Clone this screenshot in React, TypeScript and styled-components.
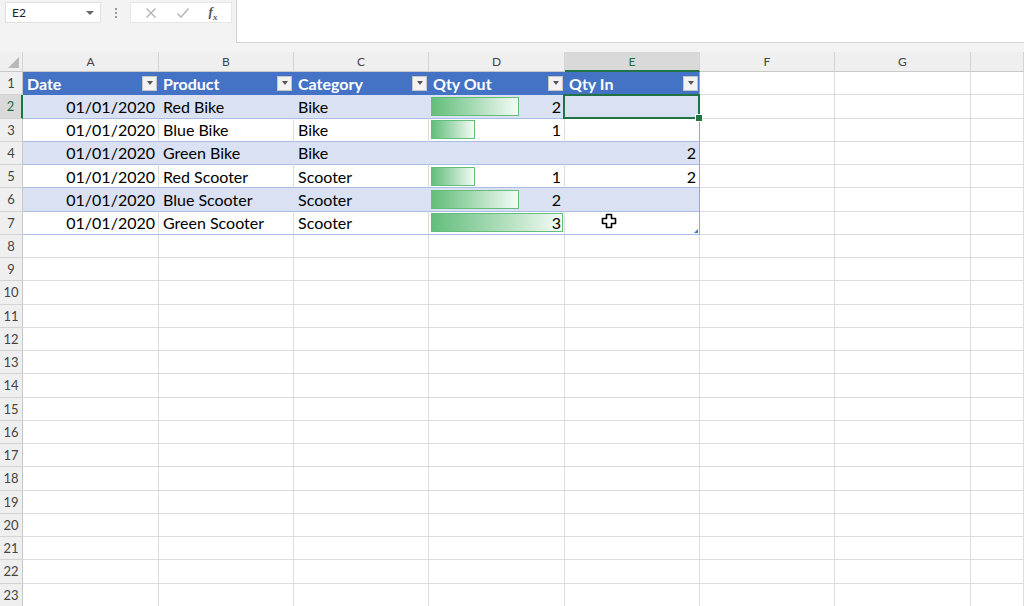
import React from "react";
import styled, { createGlobalStyle } from "styled-components";

const GlobalStyle = createGlobalStyle`
  html, body {
    margin: 0;
    padding: 0;
    background: #ffffff;
    overflow: hidden;
  }
  body {
    font-family: Lato, "Open Sans", "Liberation Sans", sans-serif;
  }
`;

const Page = styled.div`
  position: relative;
  width: 1024px;
  height: 606px;
  overflow: hidden;
  background: #f3f3f3;
  display: flex;
  flex-direction: column;
`;

const FormulaBar = styled.div`
  height: 52px;
  flex: 0 0 52px;
  display: flex;
  align-items: flex-start;
  padding-left: 5px;
  box-sizing: border-box;
`;

const NameBox = styled.div`
  margin-top: 2px;
  width: 96px;
  height: 21px;
  box-sizing: border-box;
  background: #fff;
  border: 1px solid #e0e0e0;
  display: flex;
  align-items: center;
  justify-content: space-between;
  padding: 0 6px 0 6px;
  font-size: 12px;
  color: #222;
`;

const Caret = styled.span`
  width: 0;
  height: 0;
  border-left: 4px solid transparent;
  border-right: 4px solid transparent;
  border-top: 4px solid #666;
`;

const Grip = styled.div`
  width: 29px;
  height: 25px;
  display: flex;
  flex-direction: column;
  align-items: center;
  justify-content: center;
  gap: 2px;
  span {
    width: 2px;
    height: 2px;
    background: #9a9a9a;
  }
`;

const FxButtons = styled.div`
  margin-top: 2px;
  width: 102px;
  height: 21px;
  box-sizing: border-box;
  background: #fff;
  border: 1px solid #e6e6e6;
  display: flex;
  align-items: center;
  justify-content: space-around;
  padding: 0 4px;
  color: #a6a6a6;
`;

const FxLabel = styled.span`
  font-family: "Liberation Serif", serif;
  font-style: italic;
  font-weight: 700;
  font-size: 13px;
  color: #555;
  sub {
    font-size: 9px;
  }
`;

const FormulaInput = styled.div`
  margin-left: 4px;
  flex: 1;
  height: 43px;
  box-sizing: border-box;
  background: #fff;
  border-left: 1px solid #d4d4d4;
  border-bottom: 1px solid #d4d4d4;
`;

const Grid = styled.div`
  display: grid;
  grid-template-columns: 23px 136px 135px 135px 136px 135px 135px 136px 1fr;
  grid-template-rows: 20px repeat(23, 23.25px);
  background: #fff;
`;

const Corner = styled.div`
  background: #efefef;
  border-right: 1px solid #d4d4d4;
  border-bottom: 1px solid #c8c8c8;
  box-sizing: border-box;
  display: flex;
  align-items: flex-end;
  justify-content: flex-end;
  padding: 0 3px 3px 0;
`;

const ColHead = styled.div<{ $active?: boolean }>`
  box-sizing: border-box;
  background: ${(p) => (p.$active ? "#d9d9d9" : "#efefef")};
  border-right: 1px solid #d4d4d4;
  border-bottom: ${(p) => (p.$active ? "2px solid #217346" : "1px solid #c8c8c8")};
  display: flex;
  align-items: center;
  justify-content: center;
  font-size: 12px;
  color: ${(p) => (p.$active ? "#1e6b40" : "#444")};
`;

const RowHead = styled.div<{ $active?: boolean }>`
  box-sizing: border-box;
  background: ${(p) => (p.$active ? "#d9d9d9" : "#efefef")};
  border-right: ${(p) => (p.$active ? "2px solid #217346" : "1px solid #c8c8c8")};
  border-bottom: 1px solid #d4d4d4;
  display: flex;
  align-items: center;
  justify-content: center;
  font-size: 13px;
  color: ${(p) => (p.$active ? "#1e6b40" : "#444")};
`;

type Band = "head" | "fill" | "plain" | "none";

const bandBg: Record<Band, string> = {
  head: "#4472c4",
  fill: "#d9e1f2",
  plain: "#ffffff",
  none: "#ffffff",
};

const Cell = styled.div<{
  $band: Band;
  $right?: boolean;
  $edge?: boolean;
  $selected?: boolean;
  $handle?: boolean;
}>`
  position: relative;
  box-sizing: border-box;
  display: flex;
  align-items: center;
  justify-content: ${(p) => (p.$right ? "flex-end" : "flex-start")};
  padding: 0 3px 0 4px;
  font-size: 16px;
  color: ${(p) => (p.$band === "head" ? "#fff" : "#000")};
  font-weight: ${(p) => (p.$band === "head" ? 700 : 400)};
  white-space: nowrap;
  overflow: visible;
  background: ${(p) => bandBg[p.$band]};
  border-right: 1px solid
    ${(p) =>
      p.$edge
        ? "#8eaadb"
        : p.$band === "head"
        ? "#4472c4"
        : p.$band === "fill"
        ? "#d9e1f2"
        : "#dcdcdc"};
  border-bottom: 1px solid
    ${(p) =>
      p.$band === "head" ? "#4472c4" : p.$band === "none" ? "#dcdcdc" : "#a9bde3"};

  ${(p) =>
    p.$selected &&
    `
    &::after {
      content: "";
      position: absolute;
      inset: -1px -1px -1px -2px;
      border: 2px solid #217346;
      pointer-events: none;
    }
    &::before {
      content: "";
      position: absolute;
      right: -4px;
      bottom: -4px;
      width: 6px;
      height: 6px;
      background: #217346;
      border: 1px solid #fff;
      z-index: 2;
    }
  `}

  ${(p) =>
    p.$handle &&
    `
    &::after {
      content: "";
      position: absolute;
      right: 1px;
      bottom: 1px;
      width: 0;
      height: 0;
      border-left: 4px solid transparent;
      border-bottom: 4px solid #4472c4;
    }
  `}
`;

const FilterButton = styled.span`
  margin-left: auto;
  width: 15px;
  height: 15px;
  box-sizing: border-box;
  background: #f2f2f2;
  border: 1px solid #c6c6c6;
  display: flex;
  align-items: center;
  justify-content: center;
  margin-right: -2px;
  &::after {
    content: "";
    border-left: 3.5px solid transparent;
    border-right: 3.5px solid transparent;
    border-top: 4px solid #555;
  }
`;

const BarCell = styled(Cell)`
  display: grid;
  grid-template-columns: 100%;
  grid-template-rows: 100%;
  padding: 0;
  & > * {
    grid-area: 1 / 1;
  }
`;

const Bar = styled.div`
  justify-self: start;
  align-self: center;
  margin-left: 2px;
  height: 19px;
  box-sizing: border-box;
  border: 1px solid #63be7b;
  background: linear-gradient(to right, #63be7b 0%, #a9dbb6 50%, #f4fbf6 100%);
`;

const BarValue = styled.span`
  justify-self: end;
  align-self: center;
  padding-right: 3px;
`;

const Cursor = styled.svg`
  position: absolute;
  left: 601px;
  top: 213px;
  pointer-events: none;
`;

type Row = {
  date: string;
  product: string;
  category: string;
  out: number | null;
  qin: number | null;
};

const rows: Row[] = [
  { date: "01/01/2020", product: "Red Bike", category: "Bike", out: 2, qin: null },
  { date: "01/01/2020", product: "Blue Bike", category: "Bike", out: 1, qin: null },
  { date: "01/01/2020", product: "Green Bike", category: "Bike", out: null, qin: 2 },
  { date: "01/01/2020", product: "Red Scooter", category: "Scooter", out: 1, qin: 2 },
  { date: "01/01/2020", product: "Blue Scooter", category: "Scooter", out: 2, qin: null },
  { date: "01/01/2020", product: "Green Scooter", category: "Scooter", out: 3, qin: null },
];

const columns = ["A", "B", "C", "D", "E", "F", "G", ""];
const headers = ["Date", "Product", "Category", "Qty Out", "Qty In"];
const maxOut = 3;
const barMax = 132;

function FormulaArea() {
  return (
    <FormulaBar>
      <NameBox>
        E2
        <Caret />
      </NameBox>
      <Grip>
        <span />
        <span />
        <span />
      </Grip>
      <FxButtons>
        <svg width="12" height="12" viewBox="0 0 12 12">
          <path d="M1.5 1.5 L10.5 10.5 M10.5 1.5 L1.5 10.5" stroke="#b0b0b0" strokeWidth="1.3" />
        </svg>
        <svg width="14" height="12" viewBox="0 0 14 12">
          <path d="M1.5 6.5 L5 10 L12.5 1.5" stroke="#b8b8b8" strokeWidth="1.6" fill="none" />
        </svg>
        <FxLabel>
          f<sub>x</sub>
        </FxLabel>
      </FxButtons>
      <FormulaInput />
    </FormulaBar>
  );
}

function TableRow({ row, index }: { row: Row; index: number }) {
  const band: Band = index % 2 === 0 ? "fill" : "plain";
  const last = index === rows.length - 1;
  return (
    <>
      <RowHead $active={index === 0}>{index + 2}</RowHead>
      <Cell $band={band} $right>
        {row.date}
      </Cell>
      <Cell $band={band}>{row.product}</Cell>
      <Cell $band={band}>{row.category}</Cell>
      <BarCell $band={band}>
        {row.out !== null && <Bar style={{ width: (row.out / maxOut) * barMax }} />}
        <BarValue>{row.out ?? ""}</BarValue>
      </BarCell>
      <Cell $band={band} $right $edge $selected={index === 0} $handle={last}>
        {row.qin ?? ""}
      </Cell>
      <Cell $band="none" />
      <Cell $band="none" />
      <Cell $band="none" />
    </>
  );
}

export default function App() {
  const emptyRows = Array.from({ length: 16 }, (_, i) => i + 8);
  return (
    <Page>
      <GlobalStyle />
      <FormulaArea />
      <Grid>
        <Corner>
          <svg width="11" height="11" viewBox="0 0 11 11">
            <path d="M11 0 L11 11 L0 11 Z" fill="#b9b9b9" />
          </svg>
        </Corner>
        {columns.map((c) => (
          <ColHead key={c || "H"} $active={c === "E"}>
            {c}
          </ColHead>
        ))}

        <RowHead>1</RowHead>
        {headers.map((h, i) => (
          <Cell key={h} $band="head" $edge={i === headers.length - 1}>
            {h}
            <FilterButton />
          </Cell>
        ))}
        <Cell $band="none" />
        <Cell $band="none" />
        <Cell $band="none" />

        {rows.map((r, i) => (
          <TableRow key={r.product} row={r} index={i} />
        ))}

        {emptyRows.map((n) => (
          <React.Fragment key={n}>
            <RowHead>{n}</RowHead>
            {columns.map((c) => (
              <Cell key={c || "H"} $band="none" />
            ))}
          </React.Fragment>
        ))}
      </Grid>
      <Cursor width="16" height="16" viewBox="0 0 16 16">
        <path
          d="M5.5 1.5 H10.5 V5.5 H14.5 V10.5 H10.5 V14.5 H5.5 V10.5 H1.5 V5.5 H5.5 Z"
          fill="#fff"
          stroke="#000"
          strokeWidth="1.6"
          strokeLinejoin="round"
        />
      </Cursor>
    </Page>
  );
}
